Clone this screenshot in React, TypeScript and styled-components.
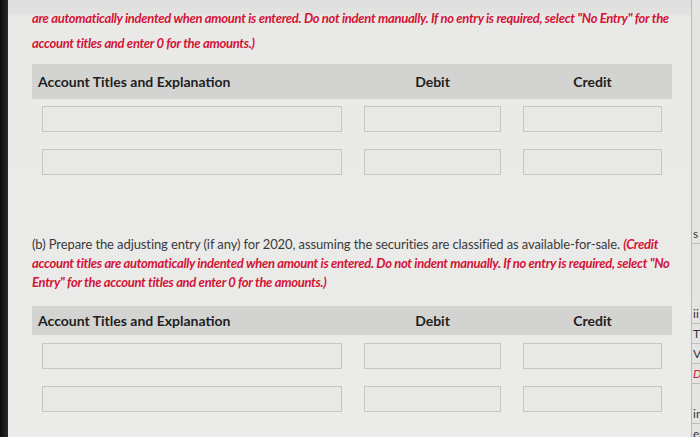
import React from 'react';
import styled, { createGlobalStyle } from 'styled-components';

const GlobalStyle = createGlobalStyle`
  html, body {
    margin: 0;
    padding: 0;
    background: #1b1b1b;
  }
  body {
    font-family: Lato, "Open Sans", sans-serif;
  }
`;

const Screen = styled.div`
  display: flex;
  width: 700px;
  height: 437px;
  overflow: hidden;
`;

const Bezel = styled.div`
  width: 8px;
  flex-shrink: 0;
  background: linear-gradient(90deg, #0c0c0c, #2a2a2a);
`;

const Page = styled.div`
  flex: 1;
  display: flex;
  flex-direction: column;
  background: linear-gradient(180deg, #dedede 0, #e2e2e1 14px, #e9e9e8 16px, #ebebea 100%);
  padding: 6px 19px 0 24px;
  min-width: 0;
`;

const Note = styled.p<{ $lh: number; $mt?: number }>`
  margin: ${p => p.$mt ?? 0}px 0 0;
  font-size: 13px;
  line-height: ${p => p.$lh}px;
  color: #3a3a3a;
  letter-spacing: -0.1px;
`;

const Red = styled.span`
  color: #d31436;
  font-weight: 700;
  font-style: italic;
  letter-spacing: -0.3px;
`;

const Table = styled.div<{ $mt: number }>`
  margin-top: ${p => p.$mt}px;
  display: flex;
  flex-direction: column;
`;

const Header = styled.div<{ $h: number }>`
  display: grid;
  grid-template-columns: 300fr 137fr 139fr;
  column-gap: 22px;
  align-items: center;
  height: ${p => p.$h}px;
  padding: 0 10px;
  background: #d3d3d2;
  font-size: 14px;
  font-weight: 700;
  color: #1f1f1f;
`;

const HeadCell = styled.div<{ $center?: boolean }>`
  text-align: ${p => (p.$center ? 'center' : 'left')};
  margin-left: ${p => (p.$center ? 0 : -4)}px;
`;

const Row = styled.div<{ $mt: number }>`
  display: grid;
  grid-template-columns: 300fr 137fr 139fr;
  column-gap: 22px;
  padding: 0 10px;
  margin-top: ${p => p.$mt}px;
`;

const Field = styled.div`
  height: 26px;
  box-sizing: border-box;
  border: 1px solid #c6c6c5;
  background: #e8e8e7;
`;

const Side = styled.div`
  width: 9px;
  flex-shrink: 0;
  display: flex;
  flex-direction: column;
  background: #e4e4e3;
  border-left: 1px solid #b9b9b8;
  overflow: hidden;
  padding-top: 224px;
  box-sizing: border-box;
`;

const SideItem = styled.div<{ $red?: boolean }>`
  height: 19px;
  line-height: 19px;
  padding-left: 1px;
  font-size: 12px;
  white-space: nowrap;
  color: ${p => (p.$red ? '#c8223a' : '#333')};
  font-style: ${p => (p.$red ? 'italic' : 'normal')};
  border-bottom: 1px solid #bdbdbc;
`;

const Gap = styled.div<{ $h: number }>`
  height: ${p => p.$h}px;
  flex-shrink: 0;
`;

function Journal({ headH, mt, first, second }: { headH: number; mt: number; first: number; second: number }) {
  return (
    <Table $mt={mt}>
      <Header $h={headH}>
        <HeadCell>Account Titles and Explanation</HeadCell>
        <HeadCell $center>Debit</HeadCell>
        <HeadCell $center>Credit</HeadCell>
      </Header>
      {[first, second].map((gap, i) => (
        <Row key={i} $mt={gap}>
          <Field />
          <Field />
          <Field />
        </Row>
      ))}
    </Table>
  );
}

export default function App() {
  return (
    <>
      <GlobalStyle />
      <Screen>
        <Bezel />
        <Page>
          <Note $lh={25}>
            <Red>
              are automatically indented when amount is entered. Do not indent manually. If no entry is required, select "No Entry" for the
              account titles and enter 0 for the amounts.)
            </Red>
          </Note>
          <Journal headH={35} mt={8} first={7} second={17} />
          <Note $lh={19} $mt={60}>
            (b) Prepare the adjusting entry (if any) for 2020, assuming the securities are classified as available-for-sale.{' '}
            <Red>
              (Credit account titles are automatically indented when amount is entered. Do not indent manually. If no entry is
              required, select "No Entry" for the account titles and enter 0 for the amounts.)
            </Red>
          </Note>
          <Journal headH={29} mt={14} first={8} second={17} />
        </Page>
        <Side>
          <SideItem>s</SideItem>
          <Gap $h={60} />
          <SideItem>ii</SideItem>
          <SideItem>T</SideItem>
          <SideItem>V</SideItem>
          <SideItem $red>D</SideItem>
          <Gap $h={20} />
          <SideItem>in</SideItem>
          <SideItem>ea</SideItem>
        </Side>
      </Screen>
    </>
  );
}
